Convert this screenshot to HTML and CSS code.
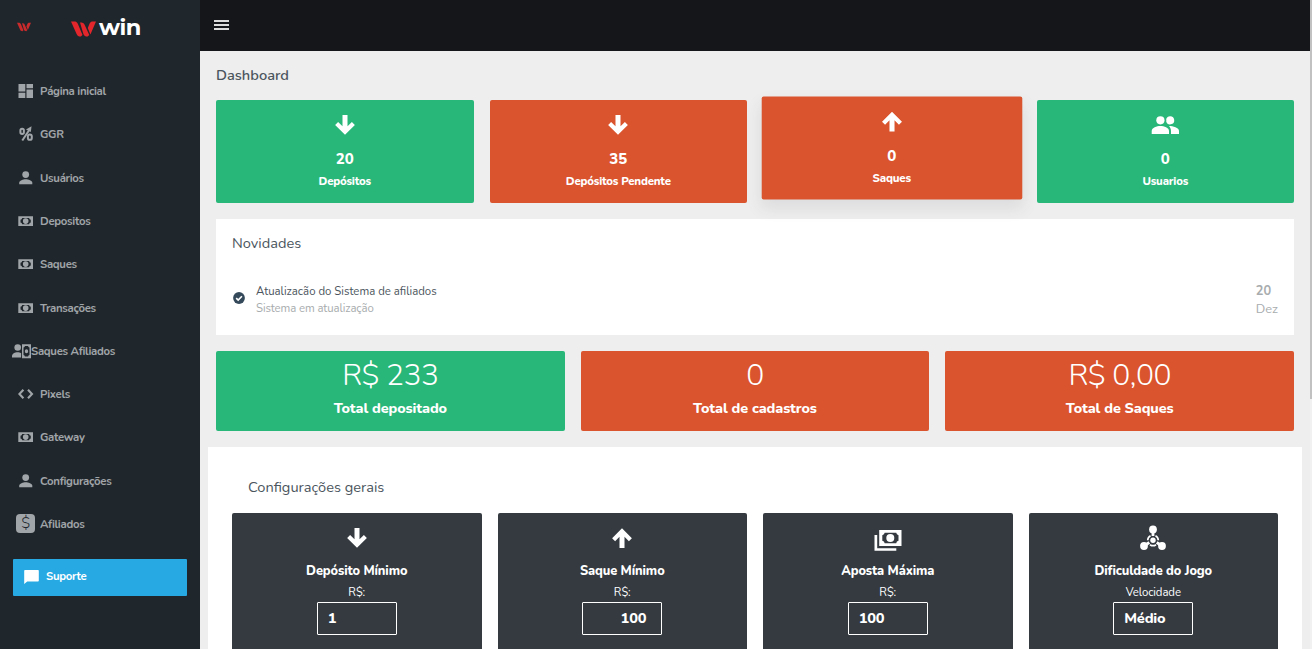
FILE: index.html
```html
<!DOCTYPE html>
<html lang="pt-br">

<head>
  <meta charset="UTF-8">
  <title>Dashboard</title>
  <link rel="stylesheet" href="styles.css">
</head>

<body>

  <!-- icons -->
  <svg class="sprite">
    <symbol id="i-dash" viewBox="0 0 16 16"><path d="M.5 1h6.800v7.500H.5zM8.500 1H15v4.300H8.500zM.5 9.700h6.800V15H.5zM8.500 6.500H15V15H8.500z"/></symbol>
    <symbol id="i-percent" viewBox="0 0 16 16">
      <g fill="none" stroke="currentColor"><rect x="2.400" y="2.700" width="3.500" height="5.200" rx="1.700" stroke-width="2"/><rect x="9.900" y="8.400" width="3.900" height="5.400" rx="1.900" stroke-width="2"/><path d="M4.300 14.500L11.300 4" stroke-width="2"/></g>
      <path d="M8 3.600L13.500.3 12.800 6z"/>
    </symbol>
    <symbol id="i-user" viewBox="0 0 16 16"><circle cx="7.700" cy="4.600" r="3.400"/><path d="M1.200 14.200v-1.500c0-2.200 4-3.500 6.500-3.500s6.600 1.300 6.600 3.500v1.500z"/></symbol>
    <symbol id="i-cash" viewBox="0 0 16 16"><path fill-rule="evenodd" d="M.3 3.200h14.700v9.900H.3zM4.200 5a2 2 0 0 1-1.700 1.700v2.900a2 2 0 0 1 1.700 1.700h6.900a2 2 0 0 1 1.700-1.700V6.700A2 2 0 0 1 11.100 5zM7.700 5.300a2.800 2.800 0 1 1 0 5.600 2.800 2.800 0 0 1 0-5.600z"/></symbol>
    <symbol id="i-user-cash" viewBox="0 0 19 16">
      <circle cx="5.700" cy="4.500" r="3.300"/><path d="M0 14.500v-1.500c0-2.200 3-3.700 5.500-3.700 1.500 0 2.600.4 3.600 1v4.200z"/>
      <path fill-rule="evenodd" d="M10 1.300h9v14h-9zM12.900 3a1.500 1.500 0 0 1-1.400 1.500v7.600a1.500 1.500 0 0 1 1.400 1.500h3.200a1.500 1.500 0 0 1 1.400-1.500V4.500A1.500 1.500 0 0 1 16.100 3zM14.500 6.300a1.700 2 0 1 1 0 4 1.700 2 0 0 1 0-4z"/>
    </symbol>
    <symbol id="i-code" viewBox="0 0 16 16"><path d="M5.400 3.700L1.400 8l4 4.300M10 3.700L14 8l-4 4.300" fill="none" stroke="currentColor" stroke-width="2.100"/></symbol>
    <symbol id="i-chat" viewBox="0 0 16 16"><path d="M1 1h13a.8.800 0 0 1 .8.800v10a.8.800 0 0 1-.8.800H3.200L.2 15V1.800A.8.800 0 0 1 1 1z"/></symbol>
    <symbol id="i-down" viewBox="0 0 24 24"><path d="M10 4h4v9l3.500-3.500 2.400 2.400L12 19.800l-7.900-7.900 2.400-2.400L10 13z"/></symbol>
    <symbol id="i-up" viewBox="0 0 24 24"><path d="M14 20h-4v-9l-3.500 3.500-2.400-2.400L12 4.200l7.900 7.900-2.400 2.400L14 11z"/></symbol>
    <symbol id="i-group" viewBox="0 0 30 30"><circle cx="10.400" cy="10.300" r="4.100"/><path d="M1.700 24v-3c0-3.500 5-5 8.700-5s8.600 1.500 8.600 5v3z"/><path d="M20.200 6.200a4.100 4.100 0 1 1-4 5.200 6 6 0 0 0 0-2.300 4.100 4.100 0 0 1 4-2.900zM19 15.900c4 0 10 1.500 10 5.100v3h-8v-3c0-2.300-.9-3.900-2-5.100z"/></symbol>
    <symbol id="i-payments" viewBox="0 0 30 30"><path fill-rule="evenodd" d="M6.200 7h22.300v16H6.200zM11.700 9.800a3 3 0 0 1-2.400 2.400v5.600a3 3 0 0 1 2.400 2.400h11.500a3 3 0 0 1 2.300-2.400v-5.600a3 3 0 0 1-2.300-2.400zM17.300 11a4 4 0 1 1 0 8 4 4 0 0 1 0-8z"/><path d="M1.500 12h2.700v13.200h19.100v2.500H1.500z"/></symbol>
    <symbol id="i-level" viewBox="0 0 30 30">
      <circle cx="15" cy="6.500" r="3.900"/><circle cx="6" cy="23" r="3.900"/><circle cx="24" cy="23" r="3.900"/><circle cx="15" cy="17.300" r="2.700"/>
      <path d="M15 6.500v6.500M6 23l5.300-3.500M24 23l-5.300-3.500" fill="none" stroke="currentColor" stroke-width="2.800"/>
      <path d="M12.500 12.700A5.300 5.300 0 0 0 9.700 17.300M17.500 12.700A5.300 5.300 0 0 1 20.300 17.300M12 21.700a5.300 5.300 0 0 0 6 0" fill="none" stroke="currentColor" stroke-width="1.700"/>
    </symbol>
    <symbol id="i-w" viewBox="0 0 25 16"><path d="M0 .5h3c2 0 3 .5 3.800 2.300L11.500 14 9.800 15.500C7.500 15.500 6.500 15 5.600 13zM9 1.500c2.500 0 3.700.3 4.600 2.200L18.300 14l-1.700 1.500c-2.300 0-3.300-.5-4.200-2.500zM16.800 7l1.700-4.200C19.200 1 20.400.5 22 .5h3l-5.600 13z"/></symbol>
  </svg>

  <div class="page">

    <aside class="sidebar">
      <div class="brand">
        <svg class="brand-mini"><use href="#i-w"/></svg>
        <svg class="brand-mark"><use href="#i-w"/></svg>
        <span class="brand-name">win</span>
      </div>

      <ul class="menu">
        <li><svg><use href="#i-dash"/></svg>Página inicial</li>
        <li><svg><use href="#i-percent"/></svg>GGR</li>
        <li><svg><use href="#i-user"/></svg>Usuários</li>
        <li><svg><use href="#i-cash"/></svg>Depositos</li>
        <li><svg><use href="#i-cash"/></svg>Saques</li>
        <li><svg><use href="#i-cash"/></svg>Transações</li>
        <li class="tight"><svg><use href="#i-user-cash"/></svg>Saques Afiliados</li>
        <li><svg><use href="#i-code"/></svg>Pixels</li>
        <li><svg><use href="#i-cash"/></svg>Gateway</li>
        <li><svg><use href="#i-user"/></svg>Configurações</li>
        <li class="wide"><span class="dollar">$</span>Afiliados</li>
      </ul>

      <a class="support"><svg><use href="#i-chat"/></svg>Suporte</a>
    </aside>

    <main class="main">
      <header class="topbar">
        <div class="burger"><span></span><span></span><span></span></div>
      </header>

      <div class="content">
        <h1 class="title">Dashboard</h1>

        <div class="cards">
          <div class="card green">
            <svg class="card-icon"><use href="#i-down"/></svg>
            <div class="card-value">20</div>
            <div class="card-label">Depósitos</div>
          </div>
          <div class="card orange">
            <svg class="card-icon"><use href="#i-down"/></svg>
            <div class="card-value">35</div>
            <div class="card-label">Depósitos Pendente</div>
          </div>
          <div class="card orange raised">
            <svg class="card-icon"><use href="#i-up"/></svg>
            <div class="card-value">0</div>
            <div class="card-label">Saques</div>
          </div>
          <div class="card green">
            <svg class="card-icon"><use href="#i-group"/></svg>
            <div class="card-value">0</div>
            <div class="card-label">Usuarios</div>
          </div>
        </div>

        <section class="news">
          <h2>Novidades</h2>
          <div class="news-row">
            <svg class="check" viewBox="0 0 12 12"><circle cx="6" cy="6" r="5.900"/><path d="M3.200 6.100l2 2 3.700-3.900"/></svg>
            <div class="news-text">
              <p>Atualizacão do Sistema de afiliados</p>
              <p class="muted">Sistema em atualização</p>
            </div>
            <div class="news-date"><b>20</b><span>Dez</span></div>
          </div>
        </section>

        <div class="totals">
          <div class="total green"><div class="amount">R$ 233</div><div class="caption">Total depositado</div></div>
          <div class="total orange"><div class="amount">0</div><div class="caption">Total de cadastros</div></div>
          <div class="total orange"><div class="amount">R$ 0,00</div><div class="caption">Total de Saques</div></div>
        </div>
      </div>

      <section class="settings">
        <h2>Configurações gerais</h2>
        <div class="cards">
          <div class="setting">
            <svg class="card-icon"><use href="#i-down"/></svg>
            <div class="setting-name">Depósito Mínimo</div>
            <label>R$:</label>
            <div class="field">1</div>
          </div>
          <div class="setting">
            <svg class="card-icon"><use href="#i-up"/></svg>
            <div class="setting-name">Saque Mínimo</div>
            <label>R$:</label>
            <div class="field right">100</div>
          </div>
          <div class="setting">
            <svg class="card-icon"><use href="#i-payments"/></svg>
            <div class="setting-name">Aposta Máxima</div>
            <label>R$:</label>
            <div class="field">100</div>
          </div>
          <div class="setting">
            <svg class="card-icon"><use href="#i-level"/></svg>
            <div class="setting-name">Dificuldade do Jogo</div>
            <label>Velocidade</label>
            <div class="field">Médio</div>
          </div>
        </div>
      </section>
    </main>

    <div class="scroll"><div class="thumb"></div></div>
  </div>

</body>

</html>
```
FILE: styles.css
```css
* {
  box-sizing: border-box;
}

body {
  margin: 0;
  overflow: hidden;
  font-family: Nunito, Lato, "Open Sans", sans-serif;
  font-size: 12px;
  color: #4b555d;
  background-color: #eee;
}

h1, h2, p, ul {
  margin: 0;
  padding: 0;
  font-weight: normal;
}

svg {
  display: block;
  flex: none;
  fill: currentColor;
}

.sprite {
  display: none;
}

.page {
  display: flex;
  height: 649px;
  overflow: hidden;
}

/* sidebar */

.sidebar {
  width: 200px;
  flex: none;
  background-color: #20272c;
}

.brand {
  display: flex;
  align-items: center;
  height: 53px;
  padding-left: 17px;
}

.brand-mini {
  width: 14px;
  height: 10px;
  color: #c92a2c;
}

.brand-mark {
  width: 25px;
  height: 16px;
  margin: 4px 3px 0 40px;
  color: #e3262b;
}

.brand-name {
  font-family: Montserrat, Inter, sans-serif;
  font-size: 22.5px;
  font-weight: 700;
  line-height: 30px;
  letter-spacing: -0.6px;
  color: #fff;
}

.menu {
  list-style: none;
  margin-top: 16.6px;
}

.menu li {
  display: flex;
  align-items: center;
  height: 43.28px;
  padding-left: 18px;
  font-size: 11.4px;
  font-weight: 700;
  letter-spacing: -0.3px;
  color: #a0a5a9;
}

.menu svg {
  width: 16px;
  height: 16px;
  margin-right: 6px;
}

.menu .tight {
  padding-left: 12px;
}

.menu .tight svg {
  width: 19px;
  margin-right: 0;
}

.menu .wide {
  padding-left: 16px;
}

.dollar {
  width: 19px;
  height: 19px;
  margin-right: 5px;
  border-radius: 4px;
  background-color: #a0a5a9;
  color: #20272c;
  font-size: 15px;
  font-weight: 300;
  line-height: 19px;
  text-align: center;
}

.support {
  display: flex;
  align-items: center;
  width: 174px;
  height: 37px;
  margin: 13.3px 0 0 13px;
  padding: 0 0 3px 11px;
  border-radius: 1px;
  background-color: #27a9e3;
  color: #fff;
  font-size: 11.4px;
  font-weight: 700;
  letter-spacing: -0.3px;
}

.support svg {
  width: 16px;
  height: 16px;
  margin: 2px 6px 0 0;
}

/* main column */

.main {
  width: 1110px;
  flex: none;
}

.topbar {
  display: flex;
  align-items: center;
  height: 51px;
  padding: 0 0 1px 14px;
  background-color: #15161a;
}

.burger {
  display: grid;
  gap: 2px;
}

.burger span {
  width: 15px;
  height: 2px;
  background-color: #dcdcdc;
}

.content {
  padding: 0 16px;
}

.title {
  height: 49px;
  font-size: 14.6px;
  font-weight: 600;
  line-height: 49px;
}

.cards {
  display: grid;
  grid-template-columns: repeat(4, 1fr);
  gap: 16px;
}

.card {
  height: 103px;
  padding-top: 10px;
  border-radius: 2px;
  text-align: center;
  color: #fff;
}

.green {
  background-color: #28b779;
}

.orange {
  background-color: #da542e;
}

.raised {
  transform: translateY(-3.5px) scale(1.01, 1);
  box-shadow: 0 8px 16px rgba(60, 60, 80, 0.1);
}

.card-icon {
  width: 30px;
  height: 30px;
  margin: 0 auto;
}

.card-value {
  margin-top: 9px;
  font-size: 15px;
  font-weight: 800;
  line-height: 20px;
}

.card-label {
  margin-top: 3px;
  font-size: 11.4px;
  font-weight: 800;
  line-height: 18px;
  letter-spacing: -0.2px;
}

.news {
  height: 116px;
  margin: 16px 0;
  padding: 14px 16px;
  background-color: #fff;
}

.news h2 {
  font-size: 14.6px;
  line-height: 20px;
}

.news-row {
  display: flex;
  align-items: center;
  margin-top: 29px;
}

.check {
  width: 12px;
  height: 12px;
  margin: -4px 11px 0 1px;
  fill: #34495a;
}

.check path {
  fill: none;
  stroke: #fff;
  stroke-width: 1.6;
}

.news-text {
  flex: 1;
  font-size: 11.4px;
  line-height: 17px;
}

.news-text .muted {
  color: #a8acae;
  letter-spacing: -0.1px;
}

.news-date {
  font-size: 12.8px;
  line-height: 18px;
  color: #a8acae;
}

.news-date b,
.news-date span {
  display: block;
}

.totals {
  display: grid;
  grid-template-columns: repeat(3, 1fr);
  gap: 16px;
}

.total {
  height: 80px;
  border-radius: 2px;
  text-align: center;
  color: #fff;
}

.amount {
  height: 48px;
  font-size: 30px;
  font-weight: 300;
  line-height: 49px;
  letter-spacing: -0.5px;
}

.caption {
  font-size: 14.4px;
  font-weight: 800;
  line-height: 19px;
  letter-spacing: -0.1px;
}

/* general settings */

.settings {
  height: 240px;
  margin: 16px 8px 0;
  padding: 30px 24px 0;
  background-color: #fff;
}

.settings h2 {
  height: 36px;
  padding-left: 16px;
  font-size: 14.6px;
  line-height: 20px;
}

.setting {
  height: 160px;
  padding-top: 10px;
  border-radius: 2px;
  background-color: #343a40;
  text-align: center;
  color: #fff;
}

.setting-name {
  margin-top: 8px;
  font-size: 12.8px;
  font-weight: 800;
  line-height: 20px;
  letter-spacing: -0.1px;
}

.setting label {
  display: block;
  margin-top: 3px;
  font-size: 11.4px;
  line-height: 16px;
  letter-spacing: -0.1px;
}

.field {
  width: 80px;
  height: 33px;
  margin: 2px auto 0;
  padding: 0 10px;
  border: 1px solid #fff;
  border-radius: 1px;
  font-size: 14.6px;
  font-weight: 800;
  line-height: 31px;
  letter-spacing: -0.2px;
  text-align: left;
}

.field.right {
  padding-right: 15px;
  text-align: right;
}

/* thin scrollbar */

.scroll {
  width: 2px;
  background-color: #f1f1f1;
}

.thumb {
  height: 399px;
  background-color: #c1c1c1;
}
```
